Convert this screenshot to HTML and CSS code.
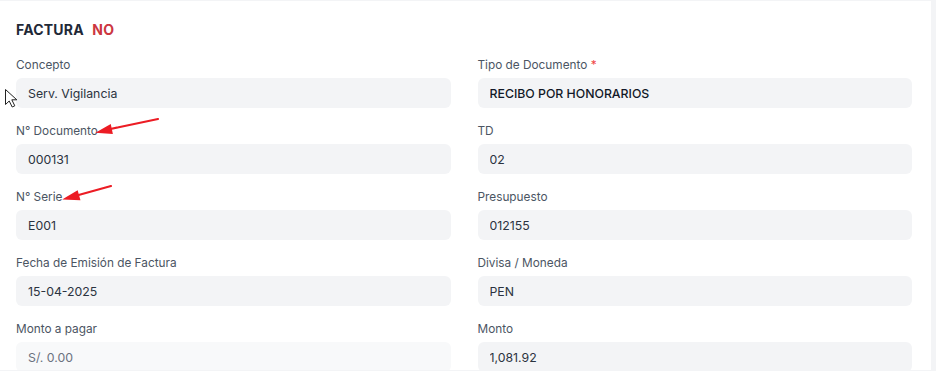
FILE: index.html
```html
<!DOCTYPE html>
<html lang="es">
<head>
    <meta charset="UTF-8">
    <meta name="viewport" content="width=device-width, initial-scale=1.0">
    <title>Factura</title>
    <link rel="stylesheet" href="styles.css">
</head>
<body>
    <div class="card">
        <h2 class="card-title">FACTURA <span class="flag-no">NO</span></h2>
        <div class="form-grid">
            <div class="field">
                <label>Concepto</label>
                <input type="text" value="Serv. Vigilancia" readonly>
            </div>
            <div class="field">
                <label>Tipo de Documento <span class="req">*</span></label>
                <input type="text" class="strong" value="RECIBO POR HONORARIOS" readonly>
            </div>
            <div class="field">
                <label>N° Documento</label>
                <input type="text" value="000131" readonly>
            </div>
            <div class="field">
                <label>TD</label>
                <input type="text" value="02" readonly>
            </div>
            <div class="field">
                <label>N° Serie</label>
                <input type="text" value="E001" readonly>
            </div>
            <div class="field">
                <label>Presupuesto</label>
                <input type="text" value="012155" readonly>
            </div>
            <div class="field">
                <label>Fecha de Emisión de Factura</label>
                <input type="text" value="15-04-2025" readonly>
            </div>
            <div class="field">
                <label>Divisa / Moneda</label>
                <input type="text" value="PEN" readonly>
            </div>
            <div class="field">
                <label>Monto a pagar</label>
                <input type="text" class="muted" placeholder="S/. 0.00">
            </div>
            <div class="field">
                <label>Monto</label>
                <input type="text" value="1,081.92" readonly>
            </div>
        </div>

        <!-- annotation overlay -->
        <svg class="marks" width="936" height="371" viewBox="0 0 936 371">
            <g stroke="#ec1c24" stroke-width="2.2" stroke-linecap="round" fill="#ec1c24">
                <line x1="158" y1="119" x2="108" y2="129.5"/>
                <polygon points="99,132 110,125.8 111.5,132.8"/>
                <line x1="111" y1="186" x2="75" y2="196"/>
                <polygon points="66,198.5 77,192 79,199"/>
            </g>
            <path d="M5.5 89.5 L5.5 104.5 L9.2 101 L12.2 107 L14.8 105.8 L11.8 99.8 L16.8 99.8 Z" fill="#fff" stroke="#222" stroke-width="1" stroke-linejoin="round"/>
        </svg>
    </div>
</body>
</html>
```

FILE: styles.css
```css
body {
    margin: 0;
    background-color: #f3f4f6;
    font-family: Inter, "Noto Sans", sans-serif;
    color: #1f2937;
}
.card {
    position: relative;
    background: #fff;
    margin: 1px 5px 0 0;
    height: 369px;
    padding: 0 19px 0 16px;
    box-sizing: border-box;
    overflow: hidden;
}
.card-title {
    margin: 0;
    padding-top: 19px;
    height: 20px;
    line-height: 20px;
    font-size: 14px;
    font-weight: 700;
    color: #1f2937;
    letter-spacing: 0.2px;
}
.flag-no {
    color: #cc3640;
    margin-left: 5px;
}
.form-grid {
    display: grid;
    grid-template-columns: 1fr 1fr;
    column-gap: 27px;
    row-gap: 15px;
    margin-top: 17px;
}
.field label {
    display: block;
    font-size: 11.8px;
    line-height: 16px;
    color: #4b5563;
    margin-bottom: 5px;
}
.req {
    color: #ef4444;
}
.field input {
    display: block;
    width: 100%;
    box-sizing: border-box;
    height: 30px;
    padding: 0 12px;
    border: none;
    border-radius: 6px;
    background-color: #f3f4f6;
    font-family: inherit;
    font-size: 12.3px;
    color: #2b3340;
    outline: none;
}
.field input.strong {
    font-weight: 500;
    color: #111827;
}
.field input.muted {
    background-color: #f8f9fa;
}
.field input.muted::placeholder {
    color: #6b7280;
    opacity: 1;
}
.marks {
    position: absolute;
    left: 0;
    top: -1px;
    pointer-events: none;
}
```
